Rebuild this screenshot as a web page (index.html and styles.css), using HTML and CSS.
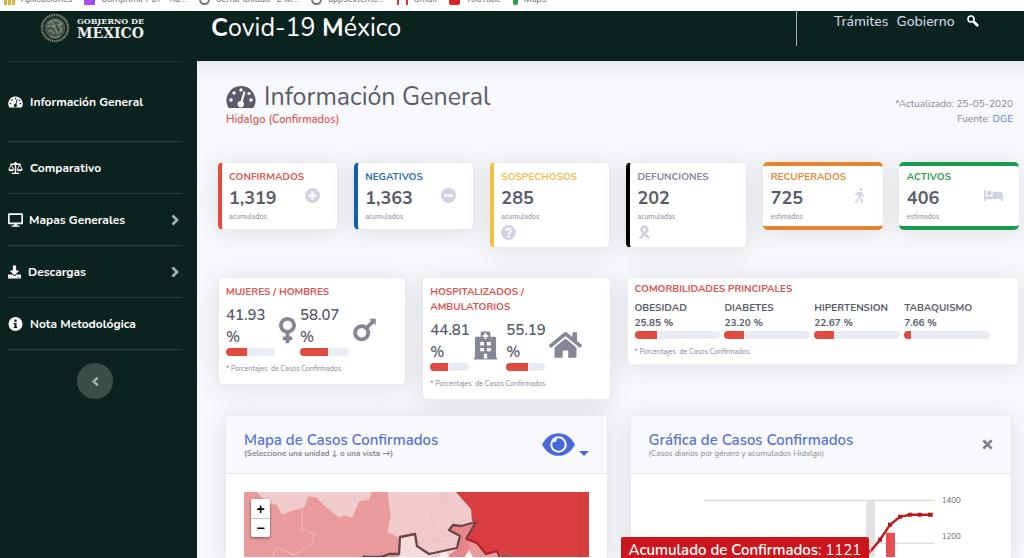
FILE: index.html
```html
<!DOCTYPE html>
<html lang="es">
<head>
<meta charset="utf-8">
<title>Covid-19 México</title>
<link rel="stylesheet" href="styles.css">
</head>
<body>
<svg class="sprite" aria-hidden="true">
  <symbol id="gauge" viewBox="0 0 30 24"><path fill="currentColor" d="M15 1A14.500 14.500 0 0 0 2.600 23h24.800A14.500 14.500 0 0 0 15 1z"/><g fill="var(--hole)"><circle cx="15" cy="5" r="1.700"/><circle cx="8" cy="8" r="1.700"/><circle cx="5" cy="15" r="1.700"/><circle cx="23" cy="8.500" r="1.500"/><circle cx="25" cy="15" r="1.700"/><path d="M17.500 6.500l2 .6-2.800 9.400a3.200 3.200 0 1 1-2-.6z"/></g></symbol>
  <symbol id="scale" viewBox="0 0 16 14"><g fill="none" stroke="currentColor" stroke-width="1.500"><path d="M8 .5v12M2.500 3h11M4 12.700h8"/><path stroke-width="1" d="M1 8.500L3.500 3.500 6 8.500M10 8.500l2.500-5 2.500 5"/></g><path fill="currentColor" d="M.3 8.300h6.400c0 3-6.400 3-6.400 0zM9.300 8.300h6.400c0 3-6.400 3-6.400 0z"/><circle cx="8" cy="2.500" r="1.600" fill="currentColor"/></symbol>
  <symbol id="desktop" viewBox="0 0 576 512"><path fill="currentColor" d="M528 0H48C21.500 0 0 21.500 0 48v320c0 26.500 21.500 48 48 48h192l-16 48h-72c-13.300 0-24 10.700-24 24s10.700 24 24 24h272c13.300 0 24-10.700 24-24s-10.700-24-24-24h-72l-16-48h192c26.500 0 48-21.500 48-48V48c0-26.500-21.500-48-48-48zm-16 352H64V64h448v288z"/></symbol>
  <symbol id="download" viewBox="0 0 512 512"><path fill="currentColor" d="M216 0h80c13.300 0 24 10.700 24 24v168h87.700c17.800 0 26.700 21.500 14.100 34.100L269.700 378.300c-7.500 7.500-19.800 7.500-27.300 0L90.100 226.100c-12.600-12.600-3.700-34.100 14.100-34.100H192V24c0-13.300 10.700-24 24-24zm296 376v112c0 13.300-10.700 24-24 24H24c-13.300 0-24-10.700-24-24V376c0-13.300 10.700-24 24-24h146.700l49 49c20.100 20.100 52.500 20.100 72.600 0l49-49H488c13.300 0 24 10.700 24 24zm-124 88c0-11-9-20-20-20s-20 9-20 20 9 20 20 20 20-9 20-20zm64 0c0-11-9-20-20-20s-20 9-20 20 9 20 20 20 20-9 20-20z"/></symbol>
  <symbol id="info" viewBox="0 0 16 16"><circle cx="8" cy="8" r="8" fill="currentColor"/><circle cx="8" cy="4.300" r="1.500" fill="var(--hole)"/><path fill="var(--hole)" d="M6 6.800h3.200v4.200H10v1.500H6V11h.8V8.300H6z"/></symbol>
  <symbol id="chevron" viewBox="0 0 8 12"><path fill="none" stroke="currentColor" stroke-width="2.800" d="M1.500 1.500L6 6l-4.500 4.500"/></symbol>
  <symbol id="plus" viewBox="0 0 16 16"><circle cx="8" cy="8" r="8" fill="currentColor"/><path stroke="var(--hole)" stroke-width="2.400" d="M3.500 8h9M8 3.500v9"/></symbol>
  <symbol id="minus" viewBox="0 0 16 16"><circle cx="8" cy="8" r="8" fill="currentColor"/><path stroke="var(--hole)" stroke-width="2.400" d="M3.500 8h9"/></symbol>
  <symbol id="question" viewBox="0 0 16 16"><circle cx="8" cy="8" r="8" fill="currentColor"/><path fill="none" stroke="var(--hole)" stroke-width="1.900" d="M5.500 6.200C5.800 3 10.700 3.300 10.600 6 10.500 7.800 8 7.800 8 9.800"/><circle cx="8" cy="12.200" r="1.200" fill="var(--hole)"/></symbol>
  <symbol id="ribbon" viewBox="0 0 14 16"><path fill="none" stroke="currentColor" stroke-width="3" d="M2 14.500L9.500 6.500C11 4.500 9.500 1.700 7 1.700S3 4.500 4.500 6.500L12 14.500"/></symbol>
  <symbol id="walking" viewBox="0 0 320 512"><path fill="currentColor" d="M208 96c26.500 0 48-21.500 48-48S234.500 0 208 0s-48 21.500-48 48 21.500 48 48 48zm94.500 149.100l-23.300-11.800-9.700-29.400c-14.700-44.600-55.700-75.800-102.200-75.900-36-.1-55.900 10.100-93.300 25.200-21.600 8.700-39.300 25.200-49.700 46.200L17.600 213c-7.800 15.800-1.500 35 14.200 42.900 15.600 7.900 34.600 1.500 42.500-14.300L81 228c3.500-7 9.300-12.500 16.500-15.400l26.800-10.800-15.200 60.700c-5.200 20.800.4 42.900 14.900 58.800l59.900 65.400c7.200 7.900 12.300 17.400 14.900 27.700l18.300 73.300c4.300 17.100 21.700 27.600 38.800 23.300 17.100-4.300 27.600-21.700 23.300-38.800l-22.200-89c-2.600-10.300-7.700-19.900-14.900-27.700l-45.500-49.700 17.200-68.700 5.500 16.500c5.300 16.100 16.700 29.400 31.700 37l23.300 11.800c15.600 7.900 34.600 1.500 42.500-14.300 7.700-15.700 1.400-35.100-14.300-43zM73.600 385.800c-3.200 8.100-8 15.400-14.200 21.500l-50 50.100c-12.500 12.500-12.500 32.800 0 45.300s32.700 12.500 45.200 0l59.400-59.400c6.100-6.100 10.900-13.400 14.200-21.500l13.500-33.800c-55.300-60.300-38.700-41.800-47.400-53.700l-20.700 51.500z"/></symbol>
  <symbol id="bed" viewBox="0 0 640 512"><path fill="currentColor" d="M176 256c44.110 0 80-35.890 80-80s-35.890-80-80-80-80 35.890-80 80 35.890 80 80 80zm352-128H304c-8.840 0-16 7.160-16 16v144H64V80c0-8.840-7.160-16-16-16H16C7.160 64 0 71.160 0 80v352c0 8.840 7.160 16 16 16h32c8.840 0 16-7.160 16-16v-48h512v48c0 8.840 7.160 16 16 16h32c8.840 0 16-7.160 16-16V240c0-61.860-50.140-112-112-112z"/></symbol>
  <symbol id="venus" viewBox="0 0 288 512"><path fill="currentColor" d="M288 176c0-79.500-64.500-144-144-144S0 96.500 0 176c0 68.500 47.900 125.900 112 140.400V368H76c-6.600 0-12 5.400-12 12v40c0 6.600 5.400 12 12 12h36v36c0 6.600 5.400 12 12 12h40c6.600 0 12-5.400 12-12v-36h36c6.600 0 12-5.400 12-12v-40c0-6.600-5.400-12-12-12h-36v-51.600c64.100-14.600 112-71.900 112-140.400zm-224 0c0-44.100 35.900-80 80-80s80 35.900 80 80-35.900 80-80 80-80-35.900-80-80z"/></symbol>
  <symbol id="mars" viewBox="0 0 384 512"><path fill="currentColor" d="M372 64h-79c-10.700 0-16 12.900-8.500 20.400l16.900 16.900-80.700 80.700c-22.200-14-48.500-22.100-76.700-22.100C64.500 160 0 224.500 0 304s64.500 144 144 144 144-64.500 144-144c0-28.200-8.100-54.500-22.100-76.700l80.700-80.700 16.900 16.900c7.600 7.600 20.400 2.200 20.400-8.500V76c.1-6.600-5.300-12-11.900-12zM144 384c-44.100 0-80-35.900-80-80s35.900-80 80-80 80 35.900 80 80-35.900 80-80 80z"/></symbol>
  <symbol id="hospital" viewBox="0 0 26 30"><path fill="currentColor" d="M1 30v-2h1V7.500L3 6.500h5V2l1-1h8l1 1v4.500h5l1 1V28h1v2z"/><g fill="var(--hole)"><path d="M12 2.500h2v2h2v2h-2v2h-2v-2h-2v-2h2z"/><path d="M7.500 12h4v3.500h-4zM14.500 12h4v3.500h-4zM7.500 18h4v3.500h-4zM14.500 18h4v3.500h-4zM11.300 24h3.400v5h-3.400z"/></g></symbol>
  <symbol id="home" viewBox="0 0 576 512"><path fill="currentColor" d="M280.370 148.260L96 300.110V464a16 16 0 0 0 16 16l112.060-.29a16 16 0 0 0 15.920-16V368a16 16 0 0 1 16-16h64a16 16 0 0 1 16 16v95.640a16 16 0 0 0 16 16.050L464 480a16 16 0 0 0 16-16V300L295.670 148.260a12.190 12.190 0 0 0-15.300 0zM571.600 251.470L488 182.560V44.050a12 12 0 0 0-12-12h-56a12 12 0 0 0-12 12v72.610L318.470 43a48 48 0 0 0-61 0L4.340 251.470a12 12 0 0 0-1.600 16.900l25.500 31A12 12 0 0 0 45.150 301l235.220-193.740a12.190 12.190 0 0 1 15.300 0L530.900 301a12 12 0 0 0 16.900-1.600l25.500-31a12 12 0 0 0-1.700-16.930z"/></symbol>
  <symbol id="eye" viewBox="0 0 32 22"><path fill="currentColor" d="M0 11C4 3.500 9.500 0 16 0s12 3.500 16 11c-4 7.500-9.500 11-16 11S4 18.500 0 11z"/><circle cx="16" cy="11" r="8" fill="var(--hole)"/><path fill="currentColor" d="M16 5a6 6 0 1 1-5.500 3.600 3 3 0 0 0 4-3.400z"/></symbol>
  <symbol id="times" viewBox="0 0 12 12"><path stroke="currentColor" stroke-width="3" d="M1.500 1.500l9 9M10.500 1.500l-9 9"/></symbol>
  <symbol id="search" viewBox="0 0 12 12"><circle cx="4" cy="4" r="3" fill="none" stroke="currentColor" stroke-width="1.600"/><path stroke="currentColor" stroke-width="2.600" d="M6.500 6.500l4.500 4.500"/></symbol>
</svg>

<nav class="bookmarks" aria-label="Marcadores">
  <a href="#"><i class="fav fav-apps"></i>Aplicaciones</a>
  <a href="#"><i class="fav fav-pdf"></i>Comprimir PDF - Rá...</a>
  <a href="#"><i class="fav fav-globe"></i>Cerrar unidad - E M...</a>
  <a href="#"><i class="fav fav-globe"></i>appsexternc...</a>
  <a href="#"><i class="fav fav-mail"></i>Gmail</a>
  <a href="#"><i class="fav fav-tube"></i>YouTube</a>
  <a href="#"><i class="fav fav-maps"></i>Maps</a>
</nav>

<div class="app">
  <aside class="sidebar">
    <a class="brand" href="#">
      <svg class="seal" viewBox="0 0 30 30" aria-hidden="true">
        <circle cx="15" cy="15" r="13" fill="none" stroke="#7d8170" stroke-width="2.500" stroke-dasharray="1.500 .7"/>
        <circle cx="15" cy="15" r="10.500" fill="#45564c"/>
        <path fill="none" stroke="#8b8e7c" stroke-width="1.300" d="M8 11c3-4 8-5 11-2l3 2-4 1c3 2 4 5 2 8M7 14c3-2 6-2 8 1s1 5 4 6M8 18c3-1 5 0 6 3M11 9c2 1 4 3 4 5M10 23c3 2 7 2 10 0"/>
      </svg>
      <span class="brand-text"><span class="brand-top">GOBIERNO DE</span><span class="brand-name">MÉXICO</span></span>
    </a>
    <nav class="menu" aria-label="Principal">
      <a class="item item-tall" href="#"><svg class="mi"><use href="#gauge"/></svg>Información General</a>
      <a class="item" href="#"><svg class="mi"><use href="#scale"/></svg>Comparativo</a>
      <a class="item" href="#"><svg class="mi mi-s"><use href="#desktop"/></svg>Mapas Generales<svg class="arrow"><use href="#chevron"/></svg></a>
      <a class="item" href="#"><svg class="mi mi-xs"><use href="#download"/></svg>Descargas<svg class="arrow"><use href="#chevron"/></svg></a>
      <a class="item" href="#"><svg class="mi"><use href="#info"/></svg>Nota Metodológica</a>
    </nav>
    <button class="collapse" aria-label="Contraer menú"><svg><use href="#chevron"/></svg></button>
  </aside>

  <div class="page">
    <header class="topbar">
      <div class="site"><b>C</b>ovid-19 <b>M</b>éxico</div>
      <nav class="links" aria-label="Gobierno">
        <a href="#">Trámites</a><a href="#">Gobierno</a>
        <button aria-label="Buscar"><svg><use href="#search"/></svg></button>
      </nav>
    </header>

    <main class="content">
      <div class="heading">
        <div>
          <h1><svg><use href="#gauge"/></svg>Información General</h1>
          <p class="scope">Hidalgo (Confirmados)</p>
        </div>
        <p class="meta">*Actualizado: 25-05-2020<br>Fuente: <a href="#">DGE</a></p>
      </div>

      <section class="stats">
        <article class="card stat red"><div><h2>CONFIRMADOS</h2><strong>1,319</strong><small>acumulados</small></div><svg><use href="#plus"/></svg></article>
        <article class="card stat blue"><div><h2>NEGATIVOS</h2><strong>1,363</strong><small>acumulados</small></div><svg><use href="#minus"/></svg></article>
        <article class="card stat stack yellow"><div><h2>SOSPECHOSOS</h2><strong>285</strong><small>acumulados</small></div><svg><use href="#question"/></svg></article>
        <article class="card stat stack black"><div><h2>DEFUNCIONES</h2><strong>202</strong><small>acumuladas</small></div><svg><use href="#ribbon"/></svg></article>
        <article class="card stat band orange"><div><h2>RECUPERADOS</h2><strong>725</strong><small>estimados</small></div><svg><use href="#walking"/></svg></article>
        <article class="card stat band green"><div><h2>ACTIVOS</h2><strong>406</strong><small>estimados</small></div><svg class="wide"><use href="#bed"/></svg></article>
      </section>

      <section class="splits">
        <article class="card split">
          <h2>MUJERES / HOMBRES</h2>
          <div class="pairs">
            <div class="pair"><div class="share w-l"><b>41.93 %</b><div class="bar"><i style="width:42%"></i></div></div><svg class="ic-venus"><use href="#venus"/></svg></div>
            <div class="pair"><div class="share w-l"><b>58.07 %</b><div class="bar"><i style="width:58%"></i></div></div><svg class="ic-mars"><use href="#mars"/></svg></div>
          </div>
          <small>* Porcentajes&nbsp; de Casos Confirmados</small>
        </article>
        <article class="card split">
          <h2>HOSPITALIZADOS /<br>AMBULATORIOS</h2>
          <div class="pairs">
            <div class="pair pair-w"><div class="share w-s"><b>44.81 %</b><div class="bar"><i style="width:45%"></i></div></div><svg class="ic-hosp"><use href="#hospital"/></svg></div>
            <div class="pair pair-w"><div class="share w-s"><b>55.19 %</b><div class="bar"><i style="width:55%"></i></div></div><svg class="ic-home"><use href="#home"/></svg></div>
          </div>
          <small>* Porcentajes&nbsp; de Casos Confirmados</small>
        </article>
        <article class="card split comorb">
          <h2>COMORBILIDADES PRINCIPALES</h2>
          <div class="causes">
            <div><b>OBESIDAD</b><b>25.85 %</b><div class="bar"><i style="width:26%"></i></div></div>
            <div><b>DIABETES</b><b>23.20 %</b><div class="bar"><i style="width:23%"></i></div></div>
            <div><b>HIPERTENSION</b><b>22.67 %</b><div class="bar"><i style="width:23%"></i></div></div>
            <div><b>TABAQUISMO</b><b>7.66 %</b><div class="bar"><i style="width:8%"></i></div></div>
          </div>
          <small>* Porcentajes&nbsp; de Casos Confirmados</small>
        </article>
      </section>

      <section class="panels">
        <article class="card panel">
          <header>
            <div><h2>Mapa de Casos Confirmados</h2><p><b>(Seleccione una unidad ↓ o una vista →)</b></p></div>
            <button class="view" aria-label="Vista"><svg><use href="#eye"/></svg><i class="caret"></i></button>
          </header>
          <div class="map">
            <svg viewBox="0 0 345 65" preserveAspectRatio="xMinYMin slice" role="img" aria-label="Mapa">
              <path fill="#e99b9b" d="M0 0h345v65H0z"/>
              <g fill="#f1cacc" stroke="#f4d5d5" stroke-width=".7">
                <path d="M13 0l12 12 8 0 5 10 8-3 14-4 4-11 9 1 7 8 15 12 5-2 8 2 7-16 10-2 2-7z"/>
                <path d="M144 0l3 24-3 16 11 5 1 20h60l16-36-5-12-9-10-6-7z"/>
              </g>
              <path fill="none" stroke="#f3bcbc" stroke-width="1" d="M58 15v22l12 5-1 9-19 12-17-8-5 10"/>
              <path fill="none" stroke="#dfbdbf" stroke-width=".8" d="M203 0l-5 10-12 9 3 14 13 11 13-4M172 54l14-8 16 4"/>
              <path fill="#f4dcdd" d="M156 45l15-3 2 12 12 8-3 3h-27z"/>
              <path fill="#e6868a" d="M205 38l4-5 8 1 15-4-10 17 5 10-8 8h-16l11-9 3-12z"/>
              <path fill="#f8f2ef" d="M196 61l6-1 3 5h-9zM221 65l4-7 4 7z"/>
              <path fill="#d93d3f" d="M212 0l6 7 9 10 1 12 4 2-9 16 11 4 9 11 11-3 5 6h86V0z"/>
              <path fill="none" stroke="#6d4346" stroke-width="2.300" stroke-linejoin="round" d="M119 64l3 1h15l8-3 10 0 1-17 15-3 2 12 12 8 28-6 3-12-11-6 4-5 8 1 15-4-10 17"/>
              <path fill="none" stroke="#b51f27" stroke-width="2.300" d="M222 47l11 4 9 11 11-3 3 6"/>
              <path stroke="#9e5553" stroke-width="3" d="M257 65l5-2 5 2"/>
              <path stroke="#c93a3b" d="M335.500 0v65"/>
            </svg>
            <div class="zoom"><button aria-label="Acercar">+</button><button aria-label="Alejar">−</button></div>
          </div>
        </article>

        <article class="card panel">
          <header>
            <div><h2>Gráfica de Casos Confirmados</h2><p>(Casos diarios por género y acumulados Hidalgo)</p></div>
            <button class="close" aria-label="Cerrar"><svg><use href="#times"/></svg></button>
          </header>
          <div class="chart">
            <svg viewBox="0 0 382 84" preserveAspectRatio="xMinYMin slice" role="img" aria-label="Gráfica">
              <path fill="#e3e3e3" d="M236 26h9v58h-9z"/>
              <path stroke="#d4d4d4" d="M73 26.500h232M73 69.500h232"/>
              <path fill="#e94d50" d="M256 59h9v25h-9z"/>
              <path fill="none" stroke="#c4181f" stroke-width="2.500" d="M234 83l7-6 9-11 10-15 10-8 10-2h20"/>
              <path fill="#b8161d" d="M248 64h4v4h-4zM258 49h4v4h-4zM268 41h4v4h-4zM278 39h4v4h-4zM288 39h4v4h-4zM298 39h5v4h-5z"/>
              <path fill="#c4181f" stroke="#fff" stroke-width=".7" d="M235 72l6 5-6 6z"/>
              <text x="312" y="29">1400</text>
              <text x="312" y="65">1200</text>
            </svg>
            <div class="tip"><b>Acumulado de Confirmados</b>: 1121</div>
          </div>
        </article>
      </section>
    </main>
  </div>
</div>
</body>
</html>
```
FILE: styles.css
```css
* { box-sizing: border-box; }
body {
  --hole: #fff;
  margin: 0;
  min-height: 100vh;
  display: flex;
  flex-direction: column;
  font-family: Nunito, Lato, "Open Sans", sans-serif;
  font-size: 12px;
  color: #5a5c69;
  background: #0b231e;
}
h1, h2, p { margin: 0; }
a { color: inherit; text-decoration: none; }
button { padding: 0; border: 0; background: none; color: inherit; font: inherit; cursor: pointer; }
svg, small, strong { display: block; }
.sprite { position: absolute; width: 0; height: 0; }

/* Bookmark strip */
.bookmarks {
  height: 11px;
  overflow: hidden;
  display: flex;
  align-items: flex-end;
  gap: 12px;
  padding: 0 4px 6px;
  background: #fff;
  color: #777;
  font: 9px/12px Roboto, sans-serif;
  white-space: nowrap;
}
.bookmarks a { display: flex; align-items: center; gap: 6px; }
.fav { width: 11px; height: 11px; }
.fav-apps { background: repeating-linear-gradient(90deg, #d9b23a 0 3px, #fff 3px 4px); }
.fav-pdf { background: linear-gradient(90deg, #c04bf0, #8a4bff); }
.fav-globe { border-radius: 50%; border: 2px solid #777; }
.fav-mail { border: solid #d23b3b; border-width: 0 2px; }
.fav-tube { border-radius: 2px; background: #d8232a; }
.fav-maps { width: 5px; border-radius: 0 0 3px 3px; background: #2b9a4a; }

.app { flex: 1; display: flex; }

/* Sidebar */
.sidebar { --hole: #0b231e; width: 197px; flex: none; padding: 0 15px 0 8px; color: #fff; }
.brand {
  height: 51px;
  display: flex;
  gap: 7px;
  padding: 2px 0 0 32px;
  border-bottom: 1px solid #1f3a34;
}
.seal { width: 30px; height: 30px; }
.brand-text { display: flex; flex-direction: column; padding-top: 3px; font-family: "DejaVu Serif", serif; font-weight: bold; color: #edf0ee; }
.brand-top { font-size: 8px; line-height: 10px; }
.brand-name { font-size: 14px; line-height: 14px; }
.item {
  display: flex;
  align-items: center;
  height: 52px;
  border-bottom: 1px solid #24403a;
  font-size: 12px;
  font-weight: 700;
}
.item-tall { height: 80px; }
.mi { width: 15px; height: 14px; margin-right: 7px; }
.mi-s { margin-right: 6px; }
.mi-xs { width: 13px; }
.arrow { width: 8px; height: 12px; margin: 0 3px 0 auto; color: #a4afac; }
.collapse {
  display: grid;
  place-items: center;
  width: 36px;
  height: 36px;
  margin: 13px auto 0;
  border-radius: 50%;
  background: #3b4f4a;
  color: #aab4b1;
}
.collapse svg { width: 7px; height: 11px; transform: scaleX(-1); }

/* Top bar */
.page { flex: 1; min-width: 0; display: flex; flex-direction: column; }
.topbar { height: 50px; flex: none; display: flex; justify-content: space-between; padding-left: 14px; color: #fff; }
.site { font-size: 25px; line-height: 34px; }
.links {
  display: flex;
  align-items: center;
  gap: 8px;
  width: 228px;
  height: 35px;
  padding: 0 0 15px 37px;
  border-left: 1px solid #a9b2b0;
  font-size: 14px;
  font-weight: 500;
  color: #cfd6e4;
}
.links button { margin-left: 4px; color: #fff; }
.links svg { width: 12px; height: 12px; }

/* Content */
.content {
  flex: 1;
  display: flex;
  flex-direction: column;
  padding-top: 21px;
  background: linear-gradient(#e9ebef, #f8f9fc 22px);
}
.heading { display: flex; justify-content: space-between; align-items: flex-end; margin: 0 11px 35px 29px; }
h1 { display: flex; align-items: center; gap: 8px; font-size: 25px; line-height: 30px; font-weight: 400; }
h1 svg { width: 30px; height: 24px; }
.scope { font-size: 11px; line-height: 15px; font-weight: 600; color: #dc5a56; }
.meta { font-size: 10px; line-height: 15px; text-align: right; color: #858796; }
.meta a { color: #5f7bd8; }

.card { background: #fff; border: 1px solid #e9ebf2; border-radius: 5px; box-shadow: 0 2px 24px rgba(58, 59, 69, .15); }
h2 { font-size: 10px; line-height: 15px; font-weight: 700; }
small { font-size: 7px; line-height: 10px; color: #858796; }

.stats { display: grid; grid-template-columns: repeat(6, 1fr); gap: 16px; align-items: start; min-height: 85px; margin: 0 5px 29px 21px; }
.stat { display: flex; justify-content: space-between; align-items: center; padding: 6px 17px 7px 7px; border-left: 4px solid; }
.stat h2 { white-space: nowrap; line-height: 16px; }
.stat > div { width: 0; flex: 1; }
.stat strong { font-size: 18px; line-height: 27px; color: #5a5c69; }
.stat svg { width: 15px; height: 15px; color: #d1d3e2; }
.stat .wide { width: 19px; }
.stack { display: block; }
.stack > div { width: auto; }
.stack svg { margin-top: 3px; }
.band { padding: 3px 16px 4px 8px; border: solid; border-width: 4px 0; }
.red { border-left-color: #e74a3b; } .red h2 { color: #dc5a50; }
.blue { border-left-color: #1261b0; } .blue h2 { color: #2f6cb5; }
.yellow { border-left-color: #f0c244; } .yellow h2 { color: #f2bd54; }
.black { border-left-color: #000; } .black h2 { color: #858796; }
.orange { border-color: #e4852c; } .orange h2 { color: #e48a3d; }
.green { border-color: #1a9a50; } .green h2 { color: #2f9b58; }

.splits { display: grid; grid-template-columns: repeat(4, 1fr); gap: 16px; align-items: start; margin: 0 5px 15px 21px; }
.split { padding: 7px 7px 10px; }
.split h2 { color: #dc5450; }
.pairs { display: flex; padding-top: 4px; }
.pair { display: flex; width: 74px; gap: 4px; align-items: center; }
.pair-w { width: 76px; }
.share b { display: block; font-size: 15px; line-height: 22px; font-weight: 600; }
.w-l { width: 49px; flex: none; }
.w-s { width: 39px; flex: none; }
.pair svg { color: #858796; flex: none; }
.ic-venus { width: 17px; height: 30px; }
.ic-mars { width: 23px; height: 30px; }
.ic-hosp { width: 25px; height: 30px; }
.ic-home { width: 33px; height: 30px; }
.bar { height: 8px; border-radius: 4px; overflow: hidden; background: #eaecf4; }
.bar i { display: block; height: 8px; background: #e04b40; }
.split small { margin-top: 8px; }
.comorb { grid-column: span 2; padding: 4px 28px 7px 7px; }
.causes { display: grid; grid-template-columns: repeat(4, 1fr); gap: 4px; padding-top: 4px; }
.causes b { display: block; font-size: 10px; line-height: 15px; font-weight: 700; }

/* Panels */
.panels { flex: 1; display: grid; grid-template-columns: 1fr 1fr; gap: 22px; margin: 0 12px 0 28px; }
.panel { display: flex; flex-direction: column; border-bottom: 0; border-radius: 5px 5px 0 0; }
.panel header {
  --hole: #f8f9fc;
  display: flex;
  justify-content: space-between;
  align-items: center;
  height: 58px;
  padding: 0 18px;
  border-bottom: 1px solid #e6e8f0;
  background: #f8f9fc;
  border-radius: 5px 5px 0 0;
}
.panel h2 { font-size: 15px; line-height: 18px; font-weight: 600; color: #5874d2; }
.panel p { font-size: 8px; line-height: 10px; color: #858796; }
.view { display: flex; align-items: flex-end; gap: 4px; color: #4868d8; }
.view svg { width: 33px; height: 23px; }
.caret { border: solid transparent; border-width: 5px 5px 0; border-top-color: #4868d8; }
.close { color: #7b7d89; }
.close svg { width: 11px; height: 11px; }
.map { position: relative; flex: 1; margin: 18px 18px 0; }
.map > svg { width: 100%; height: 65px; }
.zoom { position: absolute; top: 7px; left: 7px; display: grid; width: 19px; border-radius: 2px; background: #fff; color: #000; box-shadow: 0 1px 3px rgba(0, 0, 0, .5); }
.zoom button { height: 19px; font: bold 14px/18px "Liberation Sans", sans-serif; }
.zoom button + button { border-top: 1px solid #ccc; }
.chart { position: relative; flex: 1; }
.chart > svg { width: 100%; height: 83px; }
.chart text { font-family: Nunito, Lato, sans-serif; font-size: 8px; fill: #666; }
.tip {
  position: absolute;
  bottom: 0;
  left: -10px;
  padding: 5px 8px 0;
  border-radius: 2px 2px 0 0;
  background: #cb161d;
  color: #fff;
  font-size: 15px;
  line-height: 16px;
  white-space: nowrap;
}
.tip b { font-weight: 600; }
```
